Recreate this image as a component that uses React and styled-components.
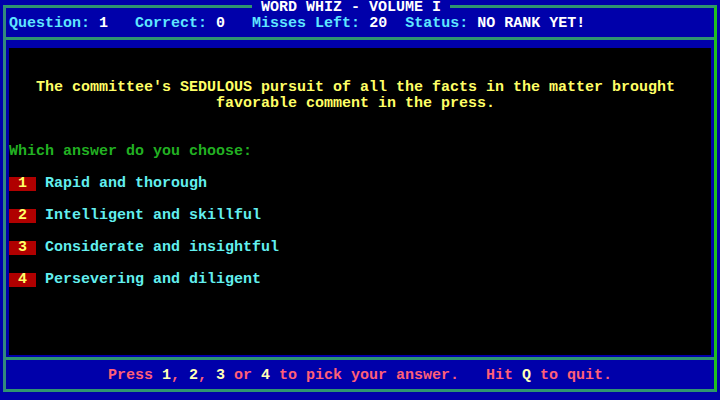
import React from 'react';
import styled, { createGlobalStyle } from 'styled-components';

const BLUE = '#0000aa';
const LINE = '#2f9470';
const CELL = 9;

const Global = createGlobalStyle`
  html, body { margin: 0; padding: 0; background: ${BLUE}; }
  body { width: 720px; height: 400px; overflow: hidden; }
`;

const Screen = styled.div`
  width: 720px;
  height: 400px;
  box-sizing: border-box;
  padding: 5px 3px 8px 3px;
  background: ${BLUE};
  font-family: "Liberation Mono", "DejaVu Sans Mono", monospace;
  font-weight: bold;
  font-size: 15px;
  line-height: 16px;
  white-space: pre;
`;

const Frame = styled.div`
  position: relative;
  height: 100%;
  box-sizing: border-box;
  padding-top: 8px;
  border-top: 3px solid ${LINE};
  border-bottom: 3px solid ${LINE};
  border-left: 3px solid #33887e;
  border-right: 3px solid #1fc01f;
  display: flex;
  flex-direction: column;
`;

const Title = styled.div`
  position: absolute;
  top: -8px;
  left: 246px;
  height: 16px;
  background: ${BLUE};
  color: #ffffff;
`;

const StatusRow = styled.div`
  height: 16px;
  padding-left: 3px;
`;

const Label = styled.span`
  color: #5fe6ff;
`;

const Value = styled.span`
  color: #ffffff;
`;

const Rule = styled.div`
  height: 3px;
  flex: none;
  background: ${LINE};
  margin-top: ${p => p.$top}px;
`;

const Panel = styled.div`
  margin: 8px 3px 0 3px;
  height: 307px;
  flex: none;
  background: #000000;
  padding-top: 32px;
  box-sizing: border-box;
  display: flex;
  flex-direction: column;
`;

const Line = styled.div`
  height: 16px;
  padding-left: ${p => (p.$col - 1) * CELL}px;
  margin-top: ${p => p.$gap || 0}px;
  color: ${p => p.$color};
`;

const Options = styled.div`
  display: flex;
  flex-direction: column;
  gap: 16px;
  margin-top: 16px;
`;

const OptionRow = styled.div`
  height: 16px;
  display: flex;
  align-items: center;
  gap: ${CELL}px;
`;

const Badge = styled.span`
  width: 27px;
  height: 14px;
  line-height: 14px;
  text-align: center;
  background: #b00000;
  color: #ffff66;
`;

const OptionText = styled.span`
  color: #62efef;
`;

const Footer = styled.div`
  height: 16px;
  margin-top: 8px;
  text-align: center;
  color: #ff5f78;
`;

const Key = styled.span`
  color: #ffffb8;
`;

const options = [
  'Rapid and thorough',
  'Intelligent and skillful',
  'Considerate and insightful',
  'Persevering and diligent',
];

export default function App() {
  return (
    <>
      <Global />
      <Screen>
        <Frame>
          <Title> WORD WHIZ - VOLUME I </Title>
          <StatusRow>
            <Label>Question: </Label><Value>1</Value>
            {'   '}
            <Label>Correct: </Label><Value>0</Value>
            {'   '}
            <Label>Misses Left: </Label><Value>20</Value>
            {'  '}
            <Label>Status: </Label><Value>NO RANK YET!</Value>
          </StatusRow>
          <Rule $top={5} />
          <Panel>
            <Line $col={4} $color="#ffff66">The committee's SEDULOUS pursuit of all the facts in the matter brought</Line>
            <Line $col={24} $color="#ffff66">favorable comment in the press.</Line>
            <Line $col={1} $gap={32} $color="#22b022">Which answer do you choose:</Line>
            <Options>
              {options.map((t, i) => (
                <OptionRow key={t}>
                  <Badge>{i + 1}</Badge>
                  <OptionText>{t}</OptionText>
                </OptionRow>
              ))}
            </Options>
          </Panel>
          <Rule $top={2} />
          <Footer>
            Press <Key>1</Key>, <Key>2</Key>, <Key>3</Key> or <Key>4</Key> to pick your answer.   Hit <Key>Q</Key> to quit.
          </Footer>
        </Frame>
      </Screen>
    </>
  );
}
